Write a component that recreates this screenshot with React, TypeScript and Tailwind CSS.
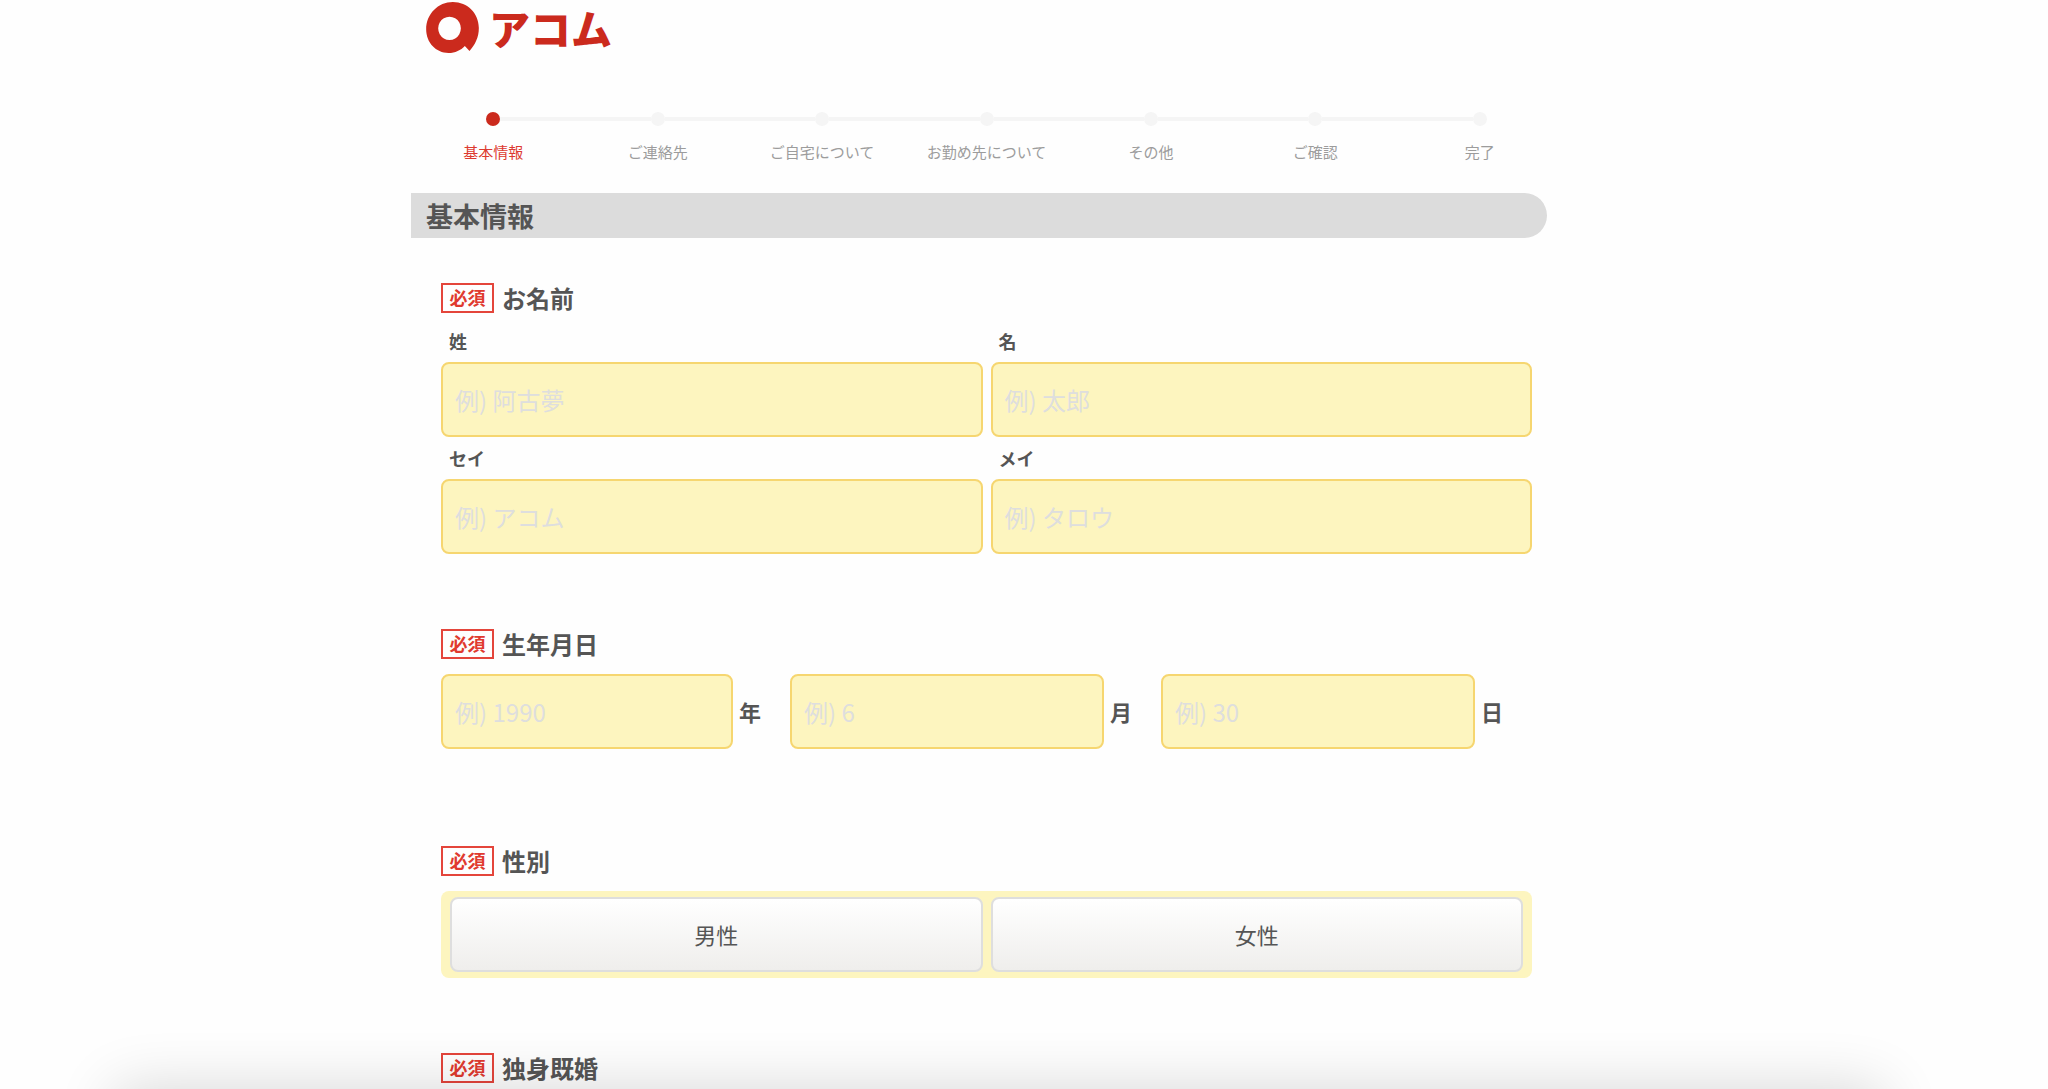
import { useState } from 'react';
import type { ReactNode } from 'react';

const STEPS = ['基本情報', 'ご連絡先', 'ご自宅について', 'お勤め先について', 'その他', 'ご確認', '完了'];

const NAME_FIELDS = [
  { id: 'last-name', label: '姓', placeholder: '例) 阿古夢' },
  { id: 'first-name', label: '名', placeholder: '例) 太郎' },
  { id: 'last-kana', label: 'セイ', placeholder: '例) アコム' },
  { id: 'first-kana', label: 'メイ', placeholder: '例) タロウ' },
];

const BIRTH_FIELDS = [
  { id: 'birth-year', unit: '年', placeholder: '例) 1990' },
  { id: 'birth-month', unit: '月', placeholder: '例) 6' },
  { id: 'birth-day', unit: '日', placeholder: '例) 30' },
];

const GENDERS = ['男性', '女性'];

const INPUT_CLASS =
  'h-[75px] min-w-0 rounded-lg border-2 border-[#f6d670] bg-[#fdf5bf] px-3 text-2xl text-[#555555] placeholder:text-[#dedede] focus:outline-none';

function Logo() {
  return (
    <a href="#" className="flex items-center gap-2.5 text-[#cb2a1d]">
      <svg viewBox="78 6 158 153" className="h-[51px] w-[53px]" fill="currentColor" aria-hidden="true">
        <path
          fillRule="evenodd"
          d="M194 138C182 151 165 159 145 159C107 159 78 128 78 88C78 42 114 6 158 6C202 6 236 40 236 84C236 112 225 134 208 153ZM148 50a34 35 0 1 0 0.1 0Z"
        />
      </svg>
      <span className="text-[41px] leading-[51px] font-black">アコム</span>
    </a>
  );
}

function StepBar({ current }: { current: number }) {
  return (
    <ol className="grid grid-cols-7">
      {STEPS.map((step, i) => (
        <li key={step} className="flex flex-col items-center gap-4">
          <div className="flex w-full items-center">
            <span className={`h-1 flex-1 ${i === 0 ? '' : 'bg-[#f5f5f5]'}`} />
            <span className={`size-3.5 rounded-full ${i === current ? 'bg-[#cb2a1d]' : 'bg-[#f5f5f5]'}`} />
            <span className={`h-1 flex-1 ${i === STEPS.length - 1 ? '' : 'bg-[#f5f5f5]'}`} />
          </div>
          <span className={`text-[15px] leading-5 whitespace-nowrap ${i === current ? 'text-[#dd3a30]' : 'text-[#9c9c9c]'}`}>
            {step}
          </span>
        </li>
      ))}
    </ol>
  );
}

function Section({ title, children }: { title: string; children?: ReactNode }) {
  return (
    <fieldset>
      <legend className="flex h-[30px] items-center gap-2">
        <span className="flex h-[30px] w-[53px] justify-center border-2 border-[#e4453b] text-lg leading-6 font-bold text-[#e03a2f]">
          必須
        </span>
        <span className="text-2xl font-bold">{title}</span>
      </legend>
      {children}
    </fieldset>
  );
}

export default function App() {
  const [gender, setGender] = useState('');

  return (
    <div className="min-h-screen bg-[#fefefe] pr-[75px] font-['Noto_Sans_CJK_JP',sans-serif] text-[#555555]">
      <div className="mx-auto max-w-[1151px]">
        <header className="px-[15px] pt-0.5 pb-[59px]">
          <Logo />
        </header>

        <StepBar current={0} />

        <h1 className="mt-[31px] mr-[15px] rounded-r-full bg-[#dcdcdc] pl-[15px] text-[27px] leading-[45px] font-bold">
          基本情報
        </h1>

        <form className="mt-[45px] flex flex-col gap-[75px] px-[30px]">
          <Section title="お名前">
            <div className="mt-[7px] grid grid-cols-2 gap-x-2">
              {NAME_FIELDS.map((field) => (
                <div key={field.id} className="flex flex-col">
                  <label htmlFor={field.id} className="pl-2 text-lg leading-[42px] font-bold">
                    {field.label}
                  </label>
                  <input id={field.id} type="text" placeholder={field.placeholder} className={INPUT_CLASS} />
                </div>
              ))}
            </div>
          </Section>

          <Section title="生年月日">
            <div className="mt-[15px] mb-[22px] grid grid-cols-[32%_34%_34%]">
              {BIRTH_FIELDS.map((field) => (
                <div key={field.id} className="flex items-center">
                  <input
                    id={field.id}
                    type="text"
                    inputMode="numeric"
                    placeholder={field.placeholder}
                    className={`flex-1 ${INPUT_CLASS}`}
                  />
                  <label htmlFor={field.id} className="w-[57px] pl-1.5 text-[22px] font-bold">
                    {field.unit}
                  </label>
                </div>
              ))}
            </div>
          </Section>

          <Section title="性別">
            <div className="mt-[15px] grid grid-cols-2 gap-2 rounded-lg bg-[#fdf5bf] px-[9px] py-1.5">
              {GENDERS.map((item) => (
                <label
                  key={item}
                  className="relative flex h-[75px] cursor-pointer items-center justify-center rounded-lg border-2 border-[#dedede] bg-linear-to-b from-white to-[#efeeec] text-[22px] has-checked:border-[#cb2a1d]"
                >
                  <input
                    type="radio"
                    name="gender"
                    value={item}
                    checked={gender === item}
                    onChange={() => setGender(item)}
                    className="sr-only"
                  />
                  {item}
                </label>
              ))}
            </div>
          </Section>

          <Section title="独身既婚" />
        </form>
      </div>

      <div className="pointer-events-none fixed top-full right-[165px] left-[115px] h-24 shadow-[0_0_60px_rgba(0,0,0,0.16)]" />
    </div>
  );
}
